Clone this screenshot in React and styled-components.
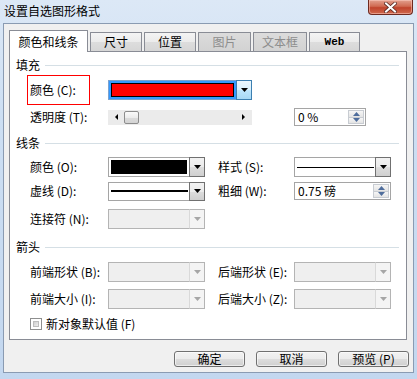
import React from "react";
import styled, { createGlobalStyle } from "styled-components";

const Global = createGlobalStyle`
  html, body { margin: 0; padding: 0; }
  body {
    background: #c9dcf1;
    font-family: "Noto Sans CJK SC", "Noto Sans", sans-serif;
    font-size: 12px;
    color: #000;
  }
`;

const Window = styled.div`
  width: 417px;
  height: 379px;
  box-sizing: border-box;
  display: flex;
  flex-direction: column;
  position: relative;
  overflow: hidden;
  background: linear-gradient(180deg, #dce8f6 0%, #cddff3 30%, #c3d7ef 100%);
`;

const TitleBar = styled.div`
  height: 23px;
  display: flex;
  justify-content: space-between;
  align-items: flex-start;
  padding: 0 4px 0 4px;
`;

const Title = styled.div`
  font-size: 12px;
  line-height: 12px;
  margin-top: 5px;
`;

const CloseBtn = styled.div`
  width: 45px;
  height: 15px;
  box-sizing: border-box;
  border: 1px solid #6e2a20;
  border-top: none;
  border-radius: 0 0 4px 4px;
  background: linear-gradient(180deg, #e2a08e 0%, #d06a52 45%, #c0432c 55%, #cf6a4e 100%);
  display: flex;
  align-items: center;
  justify-content: center;
  box-shadow: inset 0 0 0 1px rgba(255, 210, 200, 0.5);
`;

const Client = styled.div`
  margin: 0 3px;
  height: 350px;
  box-sizing: border-box;
  background: #f0f0f0;
  border: 1px solid #8a9bb2;
  display: flex;
  flex-direction: column;
  padding: 6px 0 0 5px;
`;

const TabStrip = styled.div`
  display: flex;
  align-items: flex-end;
  gap: 2px;
  height: 21px;
`;

const Tab = styled.div`
  width: ${(p) => p.$w}px;
  height: ${(p) => (p.$active ? 22 : 19)}px;
  margin-bottom: ${(p) => (p.$active ? -1 : 0)}px;
  position: relative;
  z-index: ${(p) => (p.$active ? 1 : 0)};
  box-sizing: border-box;
  border: 1px solid #898c95;
  border-bottom: none;
  border-radius: 1px 1px 0 0;
  background: ${(p) =>
    p.$active
      ? "#fff"
      : p.$disabled
      ? "linear-gradient(180deg, #dcdcdc 0%, #d2d2d2 100%)"
      : "linear-gradient(180deg, #f4f4f4 0%, #ebebeb 50%, #dddddd 51%, #d6d6d6 100%)"};
  color: ${(p) => (p.$disabled ? "#8d8d8d" : "#000")};
  font-family: ${(p) =>
    p.$mono ? '"Liberation Mono", monospace' : '"Noto Sans CJK SC", sans-serif'};
  font-weight: ${(p) => (p.$mono ? 700 : 400)};
  font-size: ${(p) => (p.$mono ? 11 : 12)}px;
  display: flex;
  justify-content: center;
  align-items: ${(p) => (p.$active ? "flex-start" : "center")};
  padding-top: ${(p) => (p.$active ? 4 : 0)}px;
  line-height: 14px;
`;

const Panel = styled.div`
  width: 398px;
  height: 289px;
  box-sizing: border-box;
  background: #fff;
  border: 1px solid #898c95;
  padding: 0 0 0 6px;
  display: flex;
  flex-direction: column;
`;

const GroupHeader = styled.div`
  display: flex;
  align-items: center;
  height: 14px;
  margin-top: ${(p) => p.$mt}px;
  gap: 5px;
  line-height: 14px;
  &::after {
    content: "";
    flex: 1;
    height: 1px;
    background: #d5dfe5;
    margin-right: 7px;
  }
`;

const Row = styled.div`
  display: grid;
  grid-template-columns: ${(p) => p.$cols};
  align-items: center;
  height: ${(p) => p.$h}px;
  margin-top: ${(p) => p.$mt}px;
  margin-left: 14px;
`;

const Label = styled.div`
  line-height: 14px;
  white-space: nowrap;
`;

const HighlightLabel = styled(Label)`
  position: relative;
  &::after {
    content: "";
    position: absolute;
    left: -3px;
    top: -8px;
    width: 63px;
    height: 30px;
    border: 1px solid #ff0000;
    box-sizing: border-box;
  }
`;

const ComboBox = styled.div`
  display: flex;
  height: ${(p) => p.$h}px;
  box-sizing: border-box;
  border: 1px solid
    ${(p) => (p.$variant === "focused" ? "#7da2ce" : p.$variant === "disabled" ? "#b4b4b4" : "#a5a5a5")};
  background: ${(p) =>
    p.$variant === "focused" ? "#3399ff" : p.$variant === "disabled" ? "#efefef" : "#fff"};
`;

const ComboField = styled.div`
  flex: 1;
  display: flex;
  align-items: ${(p) => (p.$line ? "center" : "stretch")};
  padding: ${(p) => (p.$line ? "0 1px 0 2px" : "2px")};
`;

const Swatch = styled.div`
  flex: 1;
  background: ${(p) => p.$c};
  border: 1px solid #000;
`;

const LineSample = styled.div`
  flex: 1;
  height: ${(p) => p.$w}px;
  background: #000;
`;

const DropBtn = styled.div`
  width: 16px;
  margin: -1px -1px -1px 0;
  box-sizing: border-box;
  display: flex;
  align-items: center;
  justify-content: center;
  border: 1px solid
    ${(p) => (p.$variant === "focused" ? "#3c7fb1" : p.$variant === "disabled" ? "#b4b4b4" : "#707070")};
  border-left-color: ${(p) =>
    p.$variant === "focused" ? "#3c7fb1" : p.$variant === "disabled" ? "#d9d9d9" : "#707070"};
  background: ${(p) =>
    p.$variant === "focused"
      ? "linear-gradient(180deg, #eaf6fd 0%, #d9f0fc 50%, #bee6fd 51%, #a7d9f5 100%)"
      : p.$variant === "disabled"
      ? "#f4f4f4"
      : "linear-gradient(180deg, #f2f2f2 0%, #ebebeb 50%, #dddddd 51%, #cfcfcf 100%)"};
`;

const Arrow = ({ color }) => (
  <svg width="7" height="4" viewBox="0 0 7 4">
    <path d="M0 0h7L3.5 4z" fill={color} />
  </svg>
);

const Combo = ({ variant = "normal", h = 20, children }) => (
  <ComboBox $variant={variant} $h={h}>
    {children}
    <DropBtn $variant={variant}>
      <Arrow color={variant === "disabled" ? "#a6a6a6" : "#000"} />
    </DropBtn>
  </ComboBox>
);

const SpinBox = styled.div`
  display: flex;
  height: 18px;
  box-sizing: border-box;
  border: 1px solid #a5a5a5;
  background: #fff;
`;

const SpinText = styled.div`
  flex: 1;
  padding-left: 3px;
  line-height: 16px;
  white-space: pre;
`;

const SpinButtons = styled.div`
  width: 16px;
  display: flex;
  flex-direction: column;
  padding: 1px 1px 1px 0;
`;

const SpinHalf = styled.div`
  flex: 1;
  display: flex;
  align-items: center;
  justify-content: center;
  border: 1px solid #c8ccd2;
  border-top-width: ${(p) => (p.$down ? 0 : 1)}px;
  background: linear-gradient(180deg, #f6f6f6 0%, #e4e4e4 100%);
`;

const SpinArrow = ({ down }) => (
  <svg width="7" height="4" viewBox="0 0 7 4">
    <path d={down ? "M0 0h7L3.5 4z" : "M0 4h7L3.5 0z"} fill="#4f6d9c" />
  </svg>
);

const Spin = ({ value }) => (
  <SpinBox>
    <SpinText>{value}</SpinText>
    <SpinButtons>
      <SpinHalf>
        <SpinArrow />
      </SpinHalf>
      <SpinHalf $down>
        <SpinArrow down />
      </SpinHalf>
    </SpinButtons>
  </SpinBox>
);

const SliderTrack = styled.div`
  height: 15px;
  background: #ebebeb;
  display: flex;
  align-items: center;
  padding: 0 7px 0 7px;
`;

const Thumb = styled.div`
  width: 15px;
  height: 13px;
  box-sizing: border-box;
  margin-left: 6px;
  border: 1px solid #8c8c8c;
  border-radius: 2px;
  background: linear-gradient(180deg, #fafafa 0%, #ececec 50%, #dcdcdc 51%, #d4d4d4 100%);
`;

const Spacer = styled.div`
  flex: 1;
`;

const SideArrow = ({ right }) => (
  <svg width="3" height="6" viewBox="0 0 3 6">
    <path d={right ? "M0 0L3 3L0 6z" : "M3 0L0 3L3 6z"} fill="#000" />
  </svg>
);

const CheckRow = styled.div`
  display: flex;
  align-items: center;
  gap: 4px;
  height: 13px;
  margin-top: 8px;
  margin-left: 14px;
`;

const CheckBox = styled.div`
  width: 12px;
  height: 12px;
  box-sizing: border-box;
  border: 1px solid #8e8f8f;
  padding: 2px;
  background: #fff;
  &::before {
    content: "";
    display: block;
    width: 100%;
    height: 100%;
    background: linear-gradient(135deg, #cfcfcf 0%, #eeeeee 100%);
    border: 1px solid #bdbdbd;
    box-sizing: border-box;
  }
`;

const ButtonRow = styled.div`
  display: flex;
  justify-content: flex-end;
  gap: 11px;
  margin-top: 11px;
  padding-right: 4px;
`;

const Button = styled.div`
  width: 71px;
  height: 16px;
  box-sizing: border-box;
  border: 1px solid #707070;
  border-radius: 3px;
  background: linear-gradient(180deg, #f2f2f2 0%, #ebebeb 50%, #dddddd 51%, #cfcfcf 100%);
  box-shadow: inset 0 0 0 1px rgba(255, 255, 255, 0.6);
  display: flex;
  align-items: center;
  justify-content: center;
  line-height: 14px;
`;

const LEFT_COLS = "78px 97px 13px 76px 97px";
const FILL_COLS = "78px 144px 42px 72px";

export default function App() {
  return (
    <>
      <Global />
      <Window>
        <TitleBar>
          <Title>设置自选图形格式</Title>
          <CloseBtn>
            <svg width="13" height="11" viewBox="0 0 13 11">
              <path
                d="M2 1.5L11 9.5M11 1.5L2 9.5"
                stroke="#5a2a24"
                strokeWidth="3.6"
                strokeLinecap="square"
              />
              <path
                d="M2 1.5L11 9.5M11 1.5L2 9.5"
                stroke="#fff"
                strokeWidth="2"
                strokeLinecap="square"
              />
            </svg>
          </CloseBtn>
        </TitleBar>
        <Client>
          <TabStrip>
            <Tab $active $w={79}>颜色和线条</Tab>
            <Tab $w={52}>尺寸</Tab>
            <Tab $w={52}>位置</Tab>
            <Tab $w={53} $disabled>图片</Tab>
            <Tab $w={54} $disabled>文本框</Tab>
            <Tab $w={51} $mono>Web</Tab>
          </TabStrip>
          <Panel>
            <GroupHeader $mt={6}>填充</GroupHeader>
            <Row $cols={FILL_COLS} $h={30} $mt={3}>
              <HighlightLabel>颜色 (C):</HighlightLabel>
              <Combo variant="focused" h={20}>
                <ComboField>
                  <Swatch $c="#ff0000" />
                </ComboField>
              </Combo>
            </Row>
            <Row $cols={FILL_COLS} $h={18} $mt={3}>
              <Label>透明度 (T):</Label>
              <SliderTrack>
                <SideArrow />
                <Thumb />
                <Spacer />
                <SideArrow right />
              </SliderTrack>
              <span />
              <Spin value="0 %" />
            </Row>

            <GroupHeader $mt={10}>线条</GroupHeader>
            <Row $cols={LEFT_COLS} $h={20} $mt={7}>
              <Label>颜色 (O):</Label>
              <Combo>
                <ComboField>
                  <Swatch $c="#000" />
                </ComboField>
              </Combo>
              <span />
              <Label>样式 (S):</Label>
              <Combo>
                <ComboField $line>
                  <LineSample $w={1} />
                </ComboField>
              </Combo>
            </Row>
            <Row $cols={LEFT_COLS} $h={20} $mt={4}>
              <Label>虚线 (D):</Label>
              <Combo h={19}>
                <ComboField $line>
                  <LineSample $w={2} />
                </ComboField>
              </Combo>
              <span />
              <Label>粗细 (W):</Label>
              <Spin value="0.75 磅" />
            </Row>
            <Row $cols={LEFT_COLS} $h={20} $mt={8}>
              <Label>连接符 (N):</Label>
              <Combo variant="disabled">
                <ComboField />
              </Combo>
            </Row>

            <GroupHeader $mt={11}>箭头</GroupHeader>
            <Row $cols={LEFT_COLS} $h={20} $mt={8}>
              <Label>前端形状 (B):</Label>
              <Combo variant="disabled">
                <ComboField />
              </Combo>
              <span />
              <Label>后端形状 (E):</Label>
              <Combo variant="disabled">
                <ComboField />
              </Combo>
            </Row>
            <Row $cols={LEFT_COLS} $h={20} $mt={7}>
              <Label>前端大小 (I):</Label>
              <Combo variant="disabled">
                <ComboField />
              </Combo>
              <span />
              <Label>后端大小 (Z):</Label>
              <Combo variant="disabled">
                <ComboField />
              </Combo>
            </Row>
            <CheckRow>
              <CheckBox />
              <Label>新对象默认值 (F)</Label>
            </CheckRow>
          </Panel>
          <ButtonRow>
            <Button>确定</Button>
            <Button>取消</Button>
            <Button>预览 (P)</Button>
          </ButtonRow>
        </Client>
      </Window>
    </>
  );
}
